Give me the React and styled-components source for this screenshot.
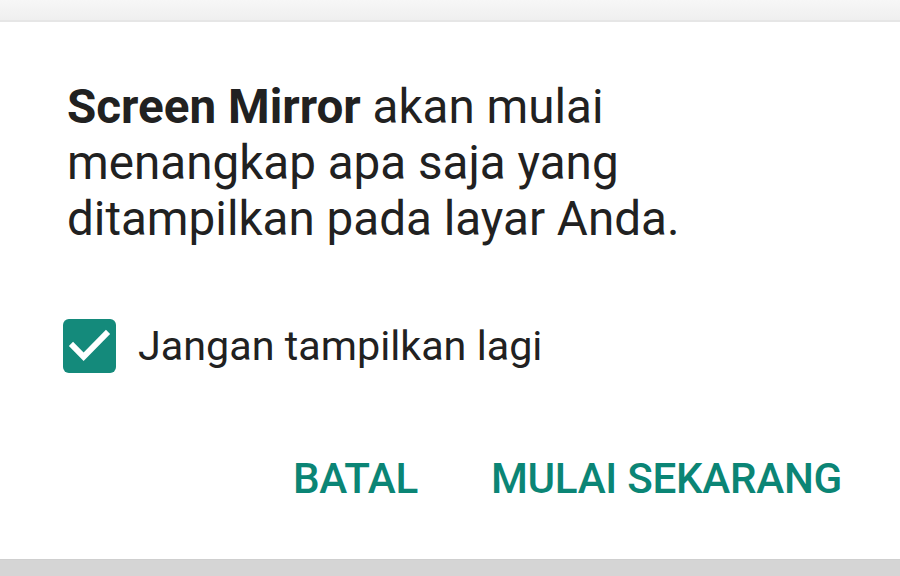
import React from "react";
import styled, { createGlobalStyle } from "styled-components";

const GlobalStyle = createGlobalStyle`
  html, body {
    margin: 0;
    padding: 0;
    background: #ffffff;
  }
  body {
    font-family: Roboto, "Noto Sans", sans-serif;
  }
`;

const Page = styled.div`
  display: flex;
  flex-direction: column;
  width: 900px;
  height: 576px;
  overflow: hidden;
`;

const TopBar = styled.div`
  height: 20px;
  background: linear-gradient(#f7f7f7, #efefef);
  border-bottom: 2px solid #e6e6e6;
`;

const Dialog = styled.div`
  flex: 1;
  display: flex;
  flex-direction: column;
  padding: 57px 58px 0 67px;
  background: #ffffff;
`;

const Message = styled.p`
  margin: 0;
  font-size: 47.6px;
  line-height: 56px;
  color: #212121;
  width: 720px;
  b {
    font-weight: 700;
  }
`;

const CheckRow = styled.label`
  display: flex;
  align-items: center;
  gap: 22px;
  margin: 72px 0 0 -4px;
  font-size: 41.3px;
  color: #212121;
`;

const Box = styled.svg`
  width: 53px;
  height: 54px;
  flex: none;
`;

const Actions = styled.div`
  display: flex;
  justify-content: flex-end;
  gap: 73px;
  margin-top: 81px;
`;

const Action = styled.button`
  border: none;
  background: none;
  padding: 0;
  font-family: Roboto, sans-serif;
  font-weight: 500;
  font-size: 42.2px;
  color: #0b8575;
  letter-spacing: -0.3px;
`;

const BottomBar = styled.div`
  height: 16px;
  background: #d5d5d5;
  border-top: 1px solid #cfcfcf;
`;

export default function App() {
  return (
    <>
      <GlobalStyle />
      <Page>
        <TopBar />
        <Dialog>
          <Message>
            <b>Screen Mirror</b> akan mulai
            <br />
            menangkap apa saja yang
            <br />
            ditampilkan pada layar Anda.
          </Message>
          <CheckRow>
            <Box viewBox="3 3 18 18" preserveAspectRatio="none">
              <rect x="3" y="3" width="18" height="18" rx="2" fill="#148a7b" />
              <path
                d="M10 17l-5-5 1.41-1.41L10 14.17l7.59-7.59L19 8l-9 9z"
                fill="#ffffff"
              />
            </Box>
            Jangan tampilkan lagi
          </CheckRow>
          <Actions>
            <Action>BATAL</Action>
            <Action>MULAI SEKARANG</Action>
          </Actions>
        </Dialog>
        <BottomBar />
      </Page>
    </>
  );
}
